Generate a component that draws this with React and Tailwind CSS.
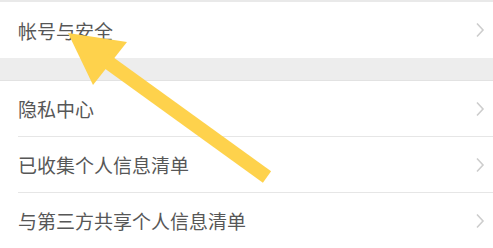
import React from "react";

const font = { fontFamily: '"Noto Sans CJK SC", "Noto Sans", sans-serif' };

function Chevron() {
  return (
    <svg width="10" height="16" viewBox="0 0 10 16" className="shrink-0">
      <polyline points="2,1.5 8,8 2,14.5" fill="none" stroke="#cdcdcd" strokeWidth="1.6" />
    </svg>
  );
}

function Row({ label, divider }) {
  return (
    <div className="pl-[18px]">
      <div className={`flex items-center justify-between h-[56px] pr-[8px] ${divider ? "border-b border-[#e6e6e6]" : ""}`}>
        <span className="text-[19px] text-[#575757] leading-none">{label}</span>
        <Chevron />
      </div>
    </div>
  );
}

export default function App() {
  return (
    <div className="relative w-[493px] h-[248px] overflow-hidden bg-white" style={font}>
      <div className="border-t-2 border-[#e9e9e9] bg-white">
        <Row label="帐号与安全" />
      </div>
      <div className="h-[23px] bg-[#ededed] border-b border-[#e2e2e2]" />
      <div className="bg-white">
        <Row label="隐私中心" divider />
        <Row label="已收集个人信息清单" divider />
        <Row label="与第三方共享个人信息清单" divider />
      </div>
      <svg className="absolute inset-0 pointer-events-none" width="493" height="248" viewBox="0 0 493 248">
        <polygon points="68,33 127,42 93,85" fill="#fed24c" />
        <line x1="105" y1="60" x2="267" y2="177" stroke="#fed24c" strokeWidth="14" />
      </svg>
    </div>
  );
}
